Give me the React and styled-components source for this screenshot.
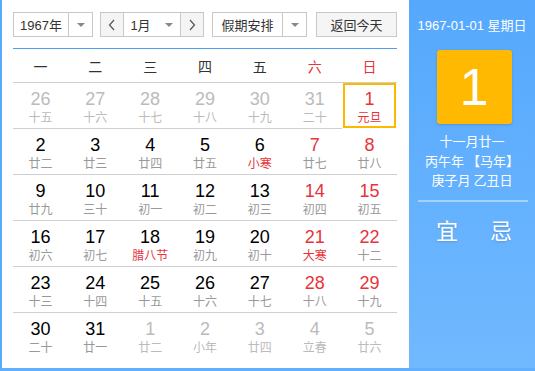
import styled, { createGlobalStyle } from "styled-components"

const Global = createGlobalStyle`
    body {
        margin: 0;
        font-family: "Liberation Sans", "Noto Sans CJK SC", sans-serif;
    }
`;

const Frame = styled.div`
    width: 535px;
    height: 371px;
    box-sizing: border-box;
    display: flex;
    border-left: 2px solid #5aabfc;
    border-bottom: 3px solid #62b0fd;
    background: #fff;
`;

const Left = styled.div`
    width: 384px;
    padding: 12px 12px 0 11px;
    display: flex;
    flex-direction: column;
`;

const Toolbar = styled.div`
    display: flex;
    height: 25px;
    gap: 7px;
    padding-bottom: 11px;
    border-bottom: 1px solid #4da1f5;
`;

const Select = styled.div`
    width: ${props => props.w}px;
    box-sizing: border-box;
    height: 25px;
    border: 1px solid #c8c8c8;
    display: flex;
    align-items: center;
    font-size: 13px;
    color: #333;
    background: #fff;
    margin-left: ${props => props.ml || 0}px;
`;

const SelectText = styled.span`
    flex: 1;
    text-align: center;
    font-family: ${props => props.cjk ? `"Noto Sans CJK SC", sans-serif` : `"Liberation Sans", "Noto Sans CJK SC", sans-serif`};
`;

const Arrow = styled.span`
    width: 23px;
    height: 100%;
    border-left: ${props => props.noline ? "none" : "1px solid #c8c8c8"};
    display: flex;
    align-items: center;
    justify-content: center;
    &::after {
        content: "";
        border-left: 4px solid transparent;
        border-right: 4px solid transparent;
        border-top: 4px solid #888;
    }
`;

const Nav = styled.span`
    width: 22px;
    height: 100%;
    background: #f4f4f4;
    display: flex;
    align-items: center;
    justify-content: center;
    border-${props => props.side}: 1px solid #c8c8c8;
`;

const TodayBtn = styled.div`
    margin-left: auto;
    width: 81px;
    box-sizing: border-box;
    height: 25px;
    border: 1px solid #c8c8c8;
    background: #f5f5f5;
    display: flex;
    align-items: center;
    justify-content: center;
    font-size: 13px;
    color: #333;
    font-family: "Noto Sans CJK SC", sans-serif;
`;

const Grid = styled.div`
    display: grid;
    grid-template-columns: repeat(7, 1fr);
`;

const Week = styled.div`
    height: 33px;
    display: flex;
    align-items: center;
    justify-content: center;
    font-size: 14px;
    color: ${props => props.red ? "#e8333a" : "#333"};
    font-family: "Noto Sans CJK SC", sans-serif;
    border-bottom: 1px solid #cfcfcf;
`;

const Cell = styled.div`
    height: 45px;
    box-sizing: border-box;
    display: flex;
    flex-direction: column;
    align-items: center;
    padding-top: ${props => props.sel ? 4 : 6}px;
    border: ${props => props.sel ? "2px solid #fbb900" : "none"};
    margin: ${props => props.sel ? "0 1px 1px 1px" : "0 0 1px 0"};
    box-shadow: ${props => props.last || props.sel ? "none" : "0 1px 0 #cfcfcf"};
`;

const Num = styled.div`
    font-size: 18px;
    line-height: 20px;
    color: ${props => props.c};
`;

const Lunar = styled.div`
    font-size: 12px;
    line-height: 16px;
    color: ${props => props.c};
    font-family: "Noto Sans CJK SC", sans-serif;
`;

const Right = styled.div`
    flex: 1;
    background: linear-gradient(#55a8fd, #71b9ff);
    color: #fff;
    display: flex;
    flex-direction: column;
    align-items: center;
    padding-top: 17px;
`;

const DateLine = styled.div`
    font-size: 13px;
    line-height: 18px;
`;

const DayBox = styled.div`
    margin: 15px 0 0 4px;
    width: 75px;
    height: 74px;
    border-radius: 3px;
    background: #ffb900;
    box-shadow: 0 1px 3px rgba(0, 0, 0, 0.15);
    display: flex;
    align-items: center;
    justify-content: center;
    font-size: 52px;
    font-family: "Liberation Sans", sans-serif;
`;

const Info = styled.div`
    margin-top: 7px;
    font-size: 13px;
    line-height: 19.5px;
    text-align: center;
    font-family: "Noto Sans CJK SC", sans-serif;
`;

const Divider = styled.div`
    width: 110px;
    height: 2px;
    margin: 10px 0 0 2px;
    background: #a3d0fd;
`;

const YiJi = styled.div`
    display: flex;
    gap: 32px;
    margin: 11px 0 0 4px;
    font-size: 22px;
    font-family: "Noto Sans CJK SC", sans-serif;
    text-shadow: 0 1px 2px rgba(0, 0, 0, 0.15);
`;

const RED = "#e8333a";
const GRAY = "#bbb";

const days = [
    ["26", "十五", "p"], ["27", "十六", "p"], ["28", "十七", "p"], ["29", "十八", "p"], ["30", "十九", "p"], ["31", "二十", "p"], ["1", "元旦", "f", "sel"],
    ["2", "廿二"], ["3", "廿三"], ["4", "廿四"], ["5", "廿五"], ["6", "小寒", "f"], ["7", "廿七"], ["8", "廿八"],
    ["9", "廿九"], ["10", "三十"], ["11", "初一"], ["12", "初二"], ["13", "初三"], ["14", "初四"], ["15", "初五"],
    ["16", "初六"], ["17", "初七"], ["18", "腊八节", "f"], ["19", "初九"], ["20", "初十"], ["21", "大寒", "f"], ["22", "十二"],
    ["23", "十三"], ["24", "十四"], ["25", "十五"], ["26", "十六"], ["27", "十七"], ["28", "十八"], ["29", "十九"],
    ["30", "二十"], ["31", "廿一"], ["1", "廿二", "p"], ["2", "小年", "p"], ["3", "廿四", "p"], ["4", "立春", "p"], ["5", "廿六", "p"],
];

const weeks = ["一", "二", "三", "四", "五", "六", "日"];

const Chevron = ({ dir }) => (
    <svg width="8" height="12" viewBox="0 0 8 12">
        <path d={dir === "left" ? "M6 1 L1.5 6 L6 11" : "M2 1 L6.5 6 L2 11"} fill="none" stroke="#555" strokeWidth="1.2" />
    </svg>
);

const App = () => {
    return (
        <Frame>
            <Global />
            <Left>
                <Toolbar>
                    <Select w={80}>
                        <SelectText>1967年</SelectText>
                        <Arrow />
                    </Select>
                    <Select w={104}>
                        <Nav side="right"><Chevron dir="left" /></Nav>
                        <SelectText>1月</SelectText>
                        <Arrow noline />
                        <Nav side="left"><Chevron dir="right" /></Nav>
                    </Select>
                    <Select w={95} ml={1}>
                        <SelectText cjk>假期安排</SelectText>
                        <Arrow />
                    </Select>
                    <TodayBtn>返回今天</TodayBtn>
                </Toolbar>
                <Grid>
                    {weeks.map((w, i) => (
                        <Week key={w} red={i > 4}>{w}</Week>
                    ))}
                    {days.map(([n, l, t, s], i) => {
                        const col = i % 7;
                        const other = t === "p";
                        const numColor = other ? GRAY : (col > 4 ? RED : "#000");
                        const lunarColor = other ? GRAY : (t === "f" ? RED : "#999");
                        return (
                            <Cell key={i} sel={!!s} last={i >= 35}>
                                <Num c={s ? RED : numColor}>{n}</Num>
                                <Lunar c={s ? RED : lunarColor}>{l}</Lunar>
                            </Cell>
                        );
                    })}
                </Grid>
            </Left>
            <Right>
                <DateLine>1967-01-01 星期日</DateLine>
                <DayBox>1</DayBox>
                <Info>
                    十一月廿一<br />
                    丙午年 【马年】<br />
                    庚子月 乙丑日
                </Info>
                <Divider />
                <YiJi>
                    <span>宜</span>
                    <span>忌</span>
                </YiJi>
            </Right>
        </Frame>
    )
}

export default App;
